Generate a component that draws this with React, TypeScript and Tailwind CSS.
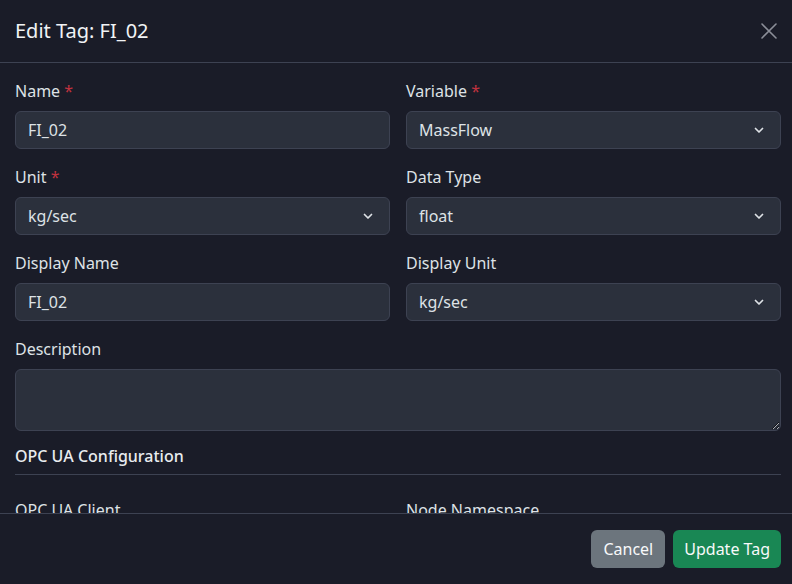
import React from 'react'

const font = { fontFamily: '"Noto Sans", "Open Sans", sans-serif' }

function Label({ text, required }: { text: string; required?: boolean }) {
  return (
    <label className="block mb-2 text-[16px] leading-6 text-[#dee2e6]">
      {text}
      {required && <span className="text-[#c0323f]"> *</span>}
    </label>
  )
}

function TextInput({ value }: { value: string }) {
  return (
    <div className="h-[38px] rounded-md border border-[#3d4252] bg-[#2b303c] px-3 flex items-center text-[16px] text-[#dee2e6]">
      {value}
    </div>
  )
}

function Select({ value }: { value: string }) {
  return (
    <div className="h-[38px] rounded-md border border-[#3d4252] bg-[#2b303c] pl-3 pr-3 flex items-center justify-between text-[16px] text-[#dee2e6]">
      <span>{value}</span>
      <svg width="16" height="16" viewBox="0 0 16 16" fill="none" className="mr-[1px]">
        <path d="M4.5 6.5l3.5 3.5 3.5-3.5" stroke="#dee2e6" strokeWidth="1.7" strokeLinecap="round" strokeLinejoin="round" />
      </svg>
    </div>
  )
}

function Field({ label, required, children }: { label: string; required?: boolean; children: React.ReactNode }) {
  return (
    <div>
      <Label text={label} required={required} />
      {children}
    </div>
  )
}

export default function App() {
  return (
    <div className="w-[792px] h-[584px] overflow-hidden bg-[#1a1c28]" style={font}>
      <div className="flex flex-col h-full rounded-md">
        {/* header */}
        <div className="h-[63px] flex items-center justify-between pl-[15px] pr-[11px] border-b border-[#3d4252] shrink-0">
          <h5 className="text-[20px] font-normal text-[#f1f3f5]">Edit Tag: FI_02</h5>
          <button className="w-6 h-6 flex items-center justify-center">
            <svg width="16" height="16" viewBox="0 0 16 16">
              <path d="M1 1l14 14M15 1L1 15" stroke="#8b8e98" strokeWidth="1.6" strokeLinecap="round" />
            </svg>
          </button>
        </div>

        {/* body */}
        <div className="flex-1 overflow-hidden pl-[15px] pr-[11px] pt-[16px]">
          <div className="grid grid-cols-2 gap-x-4 gap-y-4">
            <Field label="Name" required>
              <TextInput value="FI_02" />
            </Field>
            <Field label="Variable" required>
              <Select value="MassFlow" />
            </Field>
            <Field label="Unit" required>
              <Select value="kg/sec" />
            </Field>
            <Field label="Data Type">
              <Select value="float" />
            </Field>
            <Field label="Display Name">
              <TextInput value="FI_02" />
            </Field>
            <Field label="Display Unit">
              <Select value="kg/sec" />
            </Field>
          </div>

          <div className="mt-4">
            <Label text="Description" />
            <textarea
              readOnly
              className="block w-full h-[62px] rounded-md border border-[#3d4252] bg-[#2b303c] px-3 py-1.5 text-[16px] text-[#dee2e6] resize-y outline-none"
            />
          </div>

          <div className="mt-[13px] pb-[6px] border-b border-[#3d4252]">
            <h6 className="text-[16px] leading-6 font-medium text-[#e9ecef]">OPC UA Configuration</h6>
          </div>

          <div className="grid grid-cols-2 gap-x-4 mt-[23px]">
            <Field label="OPC UA Client">
              <Select value="" />
            </Field>
            <Field label="Node Namespace">
              <TextInput value="" />
            </Field>
          </div>
        </div>

        {/* footer */}
        <div className="h-[71px] shrink-0 border-t border-[#3d4252] flex items-center justify-end gap-2 pl-[15px] pr-[11px]">
          <button className="h-[38px] px-3 rounded-md bg-[#6c757d] text-[16px] text-[#f8f9fa]">Cancel</button>
          <button className="h-[38px] px-[11px] rounded-md bg-[#198754] text-[16px] text-[#f8f9fa]">Update Tag</button>
        </div>
      </div>
    </div>
  )
}
